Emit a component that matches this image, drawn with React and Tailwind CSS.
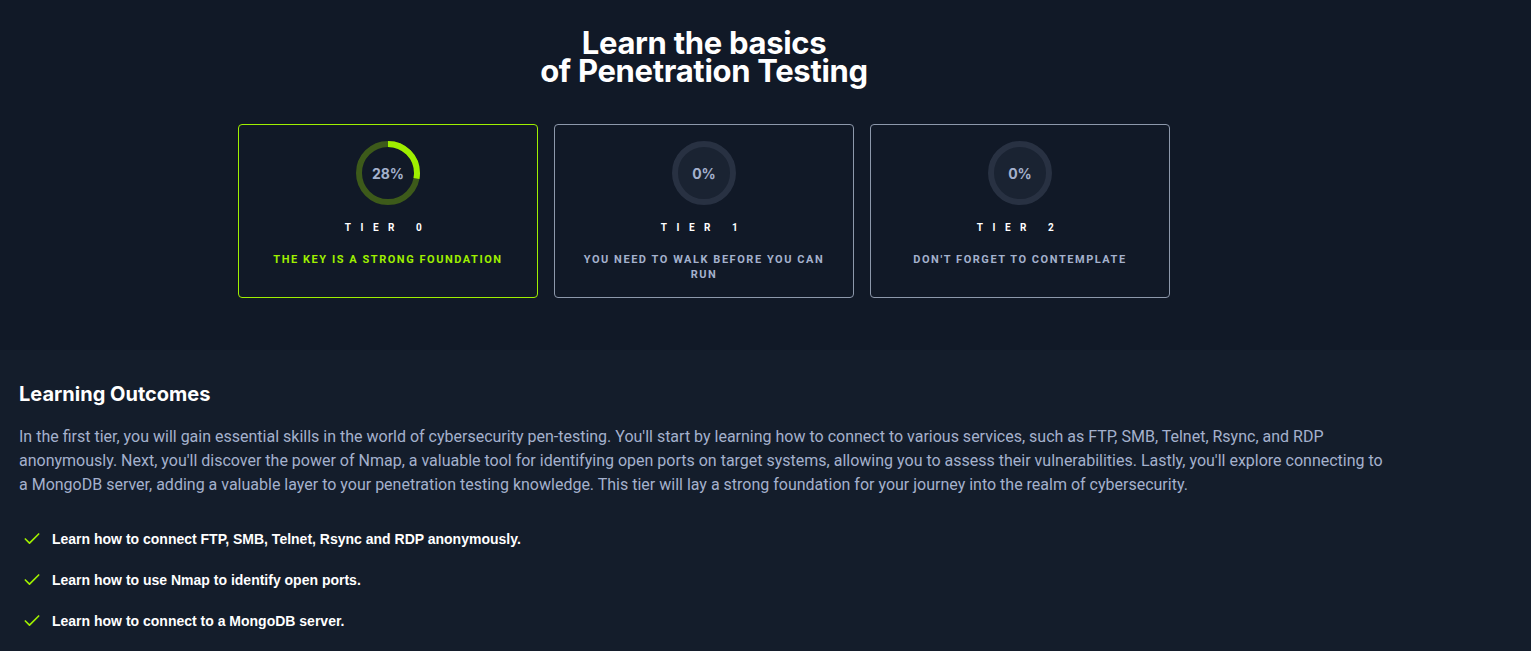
import { Check } from 'lucide-react';

const tiers = [
  { tier: 0, percent: 28, label: 'The key is a strong foundation', active: true },
  { tier: 1, percent: 0, label: 'You need to walk before you can run', active: false },
  { tier: 2, percent: 0, label: "Don't forget to contemplate", active: false },
];

const outcomes = [
  'Learn how to connect FTP, SMB, Telnet, Rsync and RDP anonymously.',
  'Learn how to use Nmap to identify open ports.',
  'Learn how to connect to a MongoDB server.',
];

function Ring({ percent, active }) {
  const r = 29;
  const c = 2 * Math.PI * r;
  return (
    <div className="relative w-16 h-16">
      <svg width="64" height="64" viewBox="0 0 64 64" className="-rotate-90">
        <circle cx="32" cy="32" r={r} fill={active ? 'none' : '#1a2332'} stroke={active ? '#3d5a1a' : '#283142'} strokeWidth="6" />
        {percent > 0 && (
          <circle
            cx="32" cy="32" r={r} fill="none" stroke="#9fef00" strokeWidth="6"
            strokeDasharray={`${(c * percent) / 100} ${c}`}
          />
        )}
      </svg>
      <span className="absolute inset-0 flex items-center justify-center text-[14px] font-bold text-[#a4b1cd]">
        {percent}%
      </span>
    </div>
  );
}

export default function App() {
  return (
    <div className="min-h-screen bg-[#141d2b] font-['Inter',sans-serif]">
      {/* top: title + tiers */}
      <div className="bg-[#111927] pb-[52px]">
        <div className="w-[1408px] flex flex-col items-center">
          <h1 className="pt-[29px] text-[31px] leading-[28px] font-bold text-white text-center tracking-[-0.01em]">
            Learn the basics<br />of Penetration Testing
          </h1>
          <div className="mt-[39px] flex gap-4">
            {tiers.map((t) => (
              <div
                key={t.tier}
                className={`w-[300px] h-[174px] rounded border flex flex-col items-center pt-4 px-6 ${
                  t.active ? 'border-[#9fef00]' : 'border-[#8d98ab]'
                }`}
              >
                <Ring percent={t.percent} active={t.active} />
                <div className="mt-[17px] text-[10px] leading-[12px] font-bold text-white tracking-[0.95em] font-['Roboto',sans-serif]">
                  TIER {t.tier}
                </div>
                <div
                  className={`mt-[18px] text-[11px] leading-[15px] font-bold uppercase tracking-[0.14em] text-center font-['Roboto',sans-serif] ${
                    t.active ? 'text-[#9fef00]' : 'text-[#a4b1cd]'
                  }`}
                >
                  {t.label}
                </div>
              </div>
            ))}
          </div>
        </div>
      </div>

      {/* bottom: learning outcomes */}
      <div className="px-[19px] pt-[32px] pb-6">
        <h2 className="text-[20px] leading-[24px] font-bold text-white">Learning Outcomes</h2>
        <p className="mt-[19px] max-w-[1365px] text-[16px] leading-[24px] text-[#a4b1cd] font-['Roboto',sans-serif]">
          In the first tier, you will gain essential skills in the world of cybersecurity pen-testing. You'll start by learning how to connect to various services, such as FTP, SMB, Telnet, Rsync, and RDP anonymously. Next, you'll discover the power of Nmap, a valuable tool for identifying open ports on target systems, allowing you to assess their vulnerabilities. Lastly, you'll explore connecting to a MongoDB server, adding a valuable layer to your penetration testing knowledge. This tier will lay a strong foundation for your journey into the realm of cybersecurity.
        </p>
        <ul className="mt-[32px] flex flex-col gap-[21px]">
          {outcomes.map((o) => (
            <li key={o} className="flex items-center gap-[10px] pl-[3px]">
              <Check size={20} strokeWidth={2} className="text-[#9fef00]" />
              <span className="text-[14px] leading-[20px] font-bold text-white font-['Liberation_Sans',Arial,sans-serif]">{o}</span>
            </li>
          ))}
        </ul>
      </div>
    </div>
  );
}
